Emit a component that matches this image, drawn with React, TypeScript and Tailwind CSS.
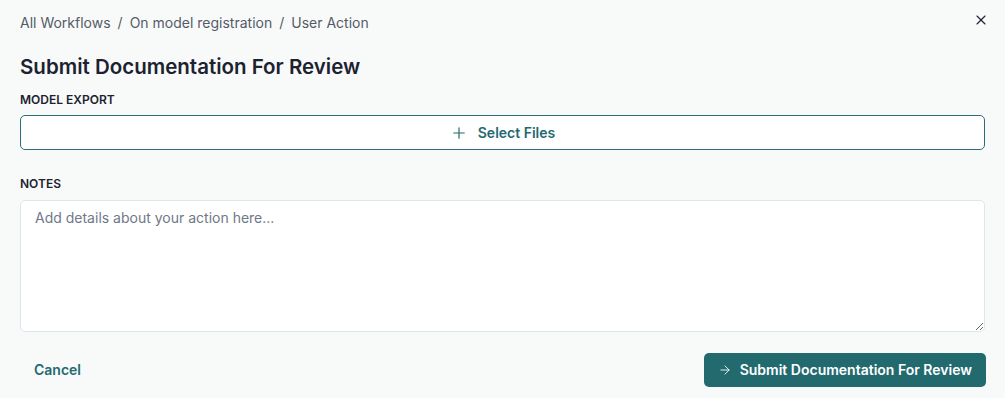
import { X, Plus, ArrowRight } from "lucide-react";

export default function App() {
  return (
    <div className="min-h-[398px] w-full bg-[#f8fafa] px-5 pt-3 font-['Inter',sans-serif] text-[#1e2433]">
      <div className="flex items-center justify-between h-[22px]">
        <nav className="flex items-center gap-[7px] text-sm text-[#555b66]">
          <span>All Workflows</span>
          <span>/</span>
          <span>On model registration</span>
          <span>/</span>
          <span>User Action</span>
        </nav>
        <button className="mr-[-4px] mt-[-7px] text-[#1e2433]">
          <X size={16} strokeWidth={1.75} />
        </button>
      </div>

      <h1 className="mt-[19px] text-[20.5px] font-semibold leading-7 text-[#1c2230]">
        Submit Documentation For Review
      </h1>

      <label className="mt-[11px] block text-xs font-semibold leading-4 text-[#1c2230]">
        MODEL EXPORT
      </label>
      <button className="mt-[7px] flex h-[35px] w-full items-center justify-center gap-[10px] rounded-[5px] border border-[#2a6f74] bg-white text-sm font-semibold text-[#236a6f]">
        <Plus size={18} strokeWidth={1.6} />
        Select Files
      </button>

      <label className="mt-[26px] block text-xs font-semibold leading-4 text-[#1c2230]">
        NOTES
      </label>
      <textarea
        className="mt-[8px] block h-[132px] w-full rounded-[5px] border border-[#dfe4ee] bg-white px-[14px] py-[7px] text-sm outline-none placeholder:text-[#6f7889]"
        placeholder="Add details about your action here..."
      />

      <div className="mt-[21px] flex items-center justify-between">
        <button className="ml-[14px] text-sm font-semibold text-[#236a6f]">Cancel</button>
        <button className="mr-[-1px] flex h-[34px] items-center gap-[8px] rounded-[5px] bg-[#236a6f] px-[14px] text-sm font-semibold text-white">
          <ArrowRight size={14} strokeWidth={1.5} />
          Submit Documentation For Review
        </button>
      </div>
    </div>
  );
}
